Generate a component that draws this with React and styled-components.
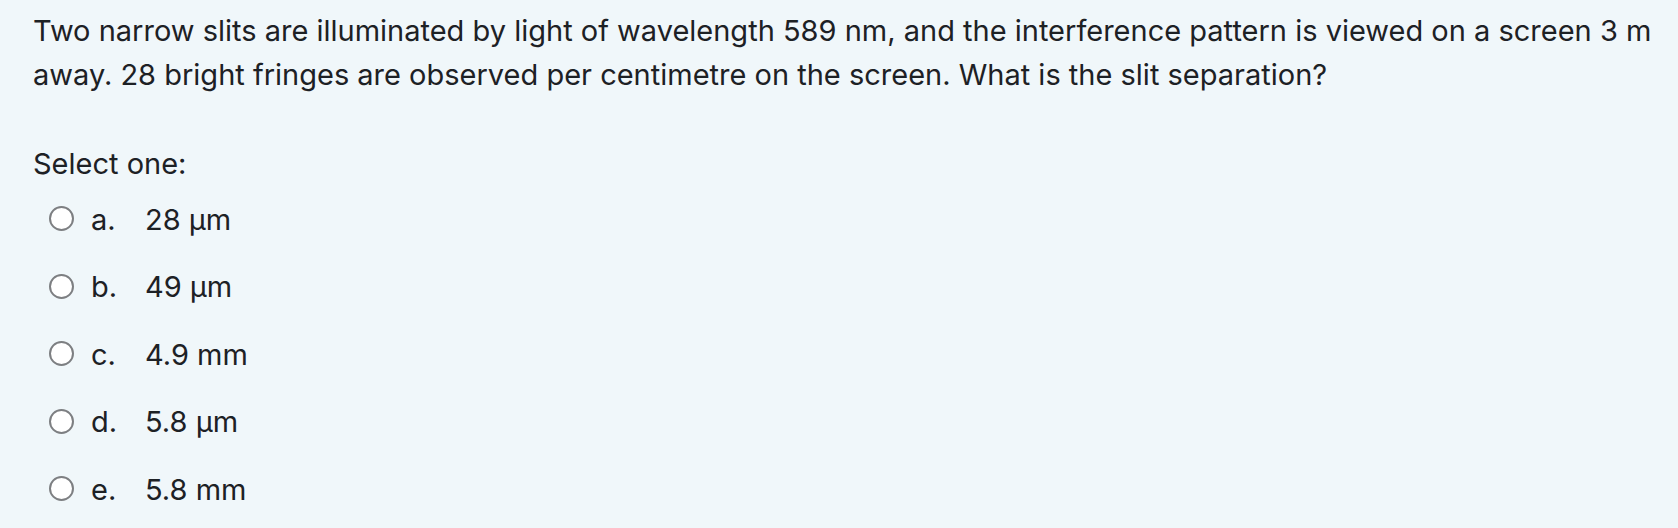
import React from "react"
import styled, { createGlobalStyle } from "styled-components"

const GlobalStyle = createGlobalStyle`
  html, body {
    margin: 0;
    padding: 0;
    background: #f0f7fa;
  }
`

const Formulation = styled.div`
  box-sizing: border-box;
  width: 1678px;
  min-height: 528px;
  padding: 9px 20px 0 33px;
  background: #f0f7fa;
  color: #1d2125;
  font-family: Inter, "Noto Sans", sans-serif;
  font-size: 29px;
  line-height: 1.5;
`

const QText = styled.p`
  margin: 0 0 46px;
`

const Prompt = styled.div`
  margin-bottom: 0;
`

const Answers = styled.div`
  display: flex;
  flex-direction: column;
`

const Option = styled.label`
  display: flex;
  align-items: center;
  padding: 12px 0 12px 16px;
`

const Radio = styled.span`
  box-sizing: border-box;
  width: 25px;
  height: 25px;
  border-radius: 50%;
  border: 2px solid #7d7f82;
  background: #fff;
  flex: none;
  margin-right: 17px;
  margin-top: -1px;
`

const Letter = styled.span`
  display: inline-block;
  width: 54px;
`

const options = [
  { letter: "a.", text: "28 µm" },
  { letter: "b.", text: "49 µm" },
  { letter: "c.", text: "4.9 mm" },
  { letter: "d.", text: "5.8 µm" },
  { letter: "e.", text: "5.8 mm" },
]

export default function App() {
  return (
    <>
      <GlobalStyle />
      <Formulation>
        <QText>
          Two narrow slits are illuminated by light of wavelength 589 nm, and the interference
          pattern is viewed on a screen 3 m away. 28 bright fringes are observed per centimetre
          on the screen. What is the slit separation?
        </QText>
        <Prompt>Select one:</Prompt>
        <Answers>
          {options.map(o => (
            <Option key={o.letter}>
              <Radio />
              <Letter>{o.letter}</Letter>
              <span>{o.text}</span>
            </Option>
          ))}
        </Answers>
      </Formulation>
    </>
  )
}
